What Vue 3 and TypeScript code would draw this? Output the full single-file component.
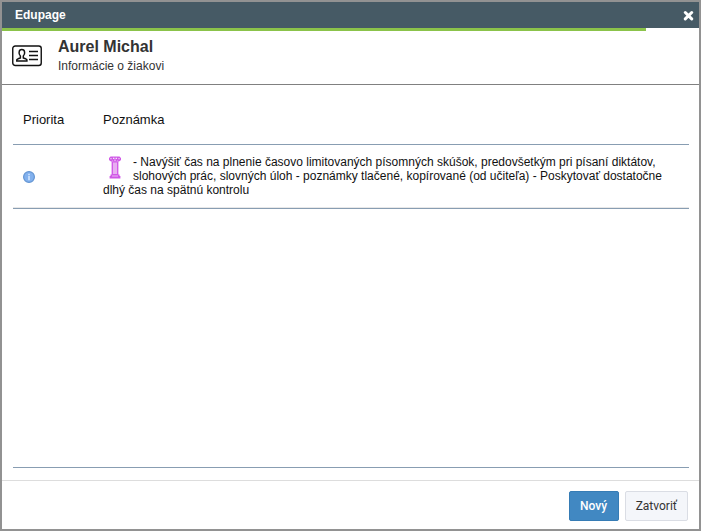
<script setup lang="ts">
interface Note {
  id: number
  priority: string
  text: string
}

const student = { name: 'Aurel Michal', subtitle: 'Informácie o žiakovi' }
const notes: Note[] = [
  {
    id: 1,
    priority: 'Informácia',
    text: '- Navýšiť čas na plnenie časovo limitovaných písomných skúšok, predovšetkým pri písaní diktátov, slohových prác, slovných úloh - poznámky tlačené, kopírované (od učiteľa) - Poskytovať dostatočne dlhý čas na spätnú kontrolu',
  },
]
const progress = 92.4
</script>

<template>
  <section class="dialog" role="dialog" aria-labelledby="dialog-title">
    <header class="titlebar">
      <h1 id="dialog-title" class="title">Edupage</h1>
      <button class="close" type="button" aria-label="Zatvoriť okno">
        <svg width="11" height="11" viewBox="0 0 11 11" aria-hidden="true">
          <path d="M2.3 2.5 8.7 8.9M8.7 2.5 2.3 8.9" stroke="#fff" stroke-width="3" stroke-linecap="round" />
        </svg>
      </button>
    </header>
    <div class="progress"><div class="progress-bar" :style="{ width: progress + '%' }"></div></div>

    <div class="person">
      <svg class="card" width="30" height="22" viewBox="0 0 30 22" fill="none" stroke="#111" aria-hidden="true">
        <rect x=".75" y="1" width="28.5" height="19.5" rx="2.5" stroke-width="1.4" />
        <path d="M8.4 11C7.2 9.9 6.9 8.2 7.1 6.9 7.3 5.2 8.3 4.5 9.8 4.5s2.6.7 2.8 2.4c.2 1.3-.1 3-1.3 4.1v2c1.5.4 3.4.9 3.6 1.9v1.2H4.8v-1.2c.2-1 2.1-1.5 3.6-1.9z" stroke-width="1.5" />
        <path d="M17 6.5h9M17 10.5h9M17 14.5h9" stroke-width="1.5" />
      </svg>
      <div>
        <h2 class="name">{{ student.name }}</h2>
        <p class="subtitle">{{ student.subtitle }}</p>
      </div>
    </div>

    <main class="content">
      <table class="notes">
        <thead>
          <tr>
            <th class="priority" scope="col">Priorita</th>
            <th scope="col">Poznámka</th>
          </tr>
        </thead>
        <tbody>
          <tr v-for="note in notes" :key="note.id">
            <td class="priority">
              <svg class="info" width="12" height="12" viewBox="0 0 12 12" role="img" :aria-label="note.priority">
                <circle cx="6" cy="6" r="5.4" fill="#82b1ee" stroke="#6294d2" stroke-width="1.2" />
                <path d="M6 2.8v1.4M6 5v4.2" stroke="#d5e7ff" stroke-width="1.5" />
              </svg>
            </td>
            <td class="note">
              <svg class="pillar" width="12" height="24" viewBox="0 -1 12 24" aria-hidden="true">
                <path d="M2.6 5h6.8v14H2.6z" fill="#d25be8" />
                <path d="M4 6.5h4V18H4z" fill="#e8aef1" />
                <path d="M2.6 5.4h6.8" stroke="#dd86ec" />
                <path d="M1.5 18.5h9v1.6H11.4v2.4H.6v-2.4h.9z" fill="#cf55e6" />
                <path d="M3 20h6" stroke="#eab6f3" />
                <path d="M1.5.5h9L12 2v2l-1.5 1.2H9L8 4.2v1.2H4V4.2l-1 1H1.5L0 4V2z" fill="#d05ae7" />
                <path d="M1.4 2.6h1.2M9.4 2.6h1.2" stroke="#f4d3f8" stroke-width="1.4" />
                <path d="M4 2.3h1.4M6.6 2.3H8" stroke="#f8e5fa" stroke-width="1.2" />
                <path d="M5.2 4.2h1.6" stroke="#f4d3f8" />
              </svg>
              {{ note.text }}
            </td>
          </tr>
        </tbody>
      </table>
    </main>

    <footer class="actions">
      <button class="btn primary" type="button">Nový</button>
      <button class="btn" type="button">Zatvoriť</button>
    </footer>
  </section>
</template>

<style>
body {
  margin: 0;
}
</style>

<style scoped>
.dialog {
  box-sizing: border-box;
  display: flex;
  flex-direction: column;
  min-height: 100vh;
  border: 2px solid #929292;
  background: #fff;
  color: #111;
  font: 12px/14px "Liberation Sans", Arial, sans-serif;
}
.titlebar {
  display: flex;
  align-items: center;
  justify-content: space-between;
  height: 26px;
  padding: 0 5px 0 13px;
  background: #465a65;
  color: #fff;
}
.title {
  margin: 0;
  font-size: 12px;
  line-height: 16px;
}
.close {
  display: flex;
  padding: 0;
  border: 0;
  background: none;
  cursor: pointer;
}
.progress-bar {
  height: 3px;
  background: #8bc34a;
}
.progress {
  height: 3px;
}
.person {
  box-sizing: border-box;
  display: flex;
  align-items: center;
  gap: 16px;
  height: 54px;
  padding: 0 10px 3px;
  border-bottom: 1px solid #808080;
  color: #333;
}
.name {
  margin: 0;
  font-size: 16px;
  line-height: 20px;
}
.subtitle {
  margin: 0;
  line-height: 18px;
}
.content {
  flex: 1;
  margin: 0 10px 12px 11px;
  border-bottom: 1px solid #889db2;
}
.notes {
  width: 100%;
  border-collapse: separate;
  border-spacing: 0;
}
.notes th {
  box-sizing: border-box;
  height: 60px;
  padding: 10px 10px 0;
  border-bottom: 1px solid #889db2;
  font-size: 13px;
  font-weight: normal;
  text-align: left;
}
.notes td {
  height: 43px;
  padding: 10px;
  border-bottom: 1px solid #889db2;
  box-shadow: inset 0 -1px #e8e8e8;
}
.notes td.priority {
  width: 60px;
}
.notes th.priority {
  width: 80px;
}
.info {
  display: block;
}
.notes .note {
  vertical-align: top;
}
.pillar {
  float: left;
  margin: 0 12px 0 6px;
}
.actions {
  display: flex;
  justify-content: flex-end;
  gap: 6px;
  padding: 10px 11px 8px;
  border-top: 1px solid #ddd;
}
.btn {
  height: 30px;
  padding: 0 10px;
  border: 1px solid #dadde4;
  border-radius: 2px;
  background: #f4f6fa;
  color: #333;
  font: 12px/16px Roboto, sans-serif;
  cursor: pointer;
}
.btn.primary {
  min-width: 50px;
  border-color: #367cb5;
  background: #4188c2;
  color: #fff;
  font-weight: 500;
}
</style>
